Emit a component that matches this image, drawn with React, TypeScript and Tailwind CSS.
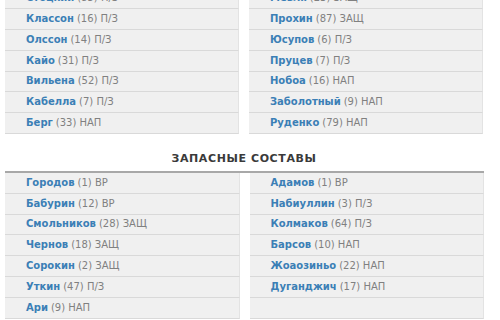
import React from "react";

type P = { n: string; r: string };

const topLeft: P[] = [
  { n: "Стоцкий", r: "(85) П/З" },
  { n: "Классон", r: "(16) П/З" },
  { n: "Олссон", r: "(14) П/З" },
  { n: "Кайо", r: "(31) П/З" },
  { n: "Вильена", r: "(52) П/З" },
  { n: "Кабелла", r: "(7) П/З" },
  { n: "Берг", r: "(33) НАП" },
];
const topRight: P[] = [
  { n: "Мевля", r: "(23) ЗАЩ" },
  { n: "Прохин", r: "(87) ЗАЩ" },
  { n: "Юсупов", r: "(6) П/З" },
  { n: "Пруцев", r: "(7) П/З" },
  { n: "Нобоа", r: "(16) НАП" },
  { n: "Заболотный", r: "(9) НАП" },
  { n: "Руденко", r: "(79) НАП" },
];
const botLeft: P[] = [
  { n: "Городов", r: "(1) ВР" },
  { n: "Бабурин", r: "(12) ВР" },
  { n: "Смольников", r: "(28) ЗАЩ" },
  { n: "Чернов", r: "(18) ЗАЩ" },
  { n: "Сорокин", r: "(2) ЗАЩ" },
  { n: "Уткин", r: "(47) П/З" },
  { n: "Ари", r: "(9) НАП" },
];
const botRight: P[] = [
  { n: "Адамов", r: "(1) ВР" },
  { n: "Набиуллин", r: "(3) П/З" },
  { n: "Колмаков", r: "(64) П/З" },
  { n: "Барсов", r: "(10) НАП" },
  { n: "Жоаозиньо", r: "(22) НАП" },
  { n: "Дуганджич", r: "(17) НАП" },
  { n: "", r: "" },
];

function Col({ items }: { items: P[] }) {
  return (
    <div className="flex flex-col">
      {items.map((p, i) => (
        <div
          key={i}
          className="h-[20.8px] box-border flex items-center pl-[21px] bg-[#f0f0f0] border-b border-b-[#d9d9d9] border-r border-r-[#e3e3e3] text-[10px] leading-none whitespace-nowrap"
        >
          {p.n && (
            <>
              <span className="font-bold text-[#3b7fb6]">{p.n}</span>
              <span className="text-[#808080] ml-[3px]">{p.r}</span>
            </>
          )}
        </div>
      ))}
    </div>
  );
}

export default function App() {
  return (
    <div className="w-[500px] h-[320px] overflow-hidden bg-white font-['DejaVu_Sans',sans-serif]">
      <div className="mt-[-11.6px] ml-[5px] w-[478px] grid grid-cols-2 gap-x-[10px]">
        <Col items={topLeft} />
        <Col items={topRight} />
      </div>
      <div className="ml-[5px] w-[478px] pt-[18px] pb-[5px] text-center text-[11px] leading-[14px] font-bold tracking-[0.6px] text-[#3a3a3a]">
        ЗАПАСНЫЕ СОСТАВЫ
      </div>
      <div className="ml-[5px] w-[479px] border-t-2 border-[#a8a8a8] grid grid-cols-2 gap-x-[10px]">
        <Col items={botLeft} />
        <Col items={botRight} />
      </div>
    </div>
  );
}
